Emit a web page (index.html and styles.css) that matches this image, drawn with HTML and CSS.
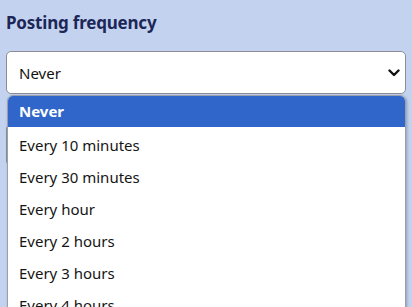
FILE: index.html
```html
<!DOCTYPE html>
<html lang="en">
<head>
	<meta charset="UTF-8">
	<title>Posting frequency</title>
	<link rel="stylesheet" href="styles.css">
</head>
<body>
	<div class="field">
		<h2 class="label">Posting frequency</h2>
		<div class="picker">
			<div class="select">
				<span>Never</span>
				<svg class="chev" width="12" height="8" viewBox="0 0 12 8"><path d="M1.5 1.5 L6 6 L10.5 1.5" fill="none" stroke="#111" stroke-width="2.4" stroke-linecap="round" stroke-linejoin="round"/></svg>
			</div>
			<ul class="options">
				<li class="selected">Never</li>
				<li>Every 10 minutes</li>
				<li>Every 30 minutes</li>
				<li>Every hour</li>
				<li>Every 2 hours</li>
				<li>Every 3 hours</li>
				<li>Every 4 hours</li>
				<li>Every 6 hours</li>
			</ul>
		</div>
		<div class="below"></div>
	</div>
</body>
</html>
```

FILE: styles.css
```css
body{
	margin:0;
	background:#c3d3ef;
	font-family:"Noto Sans", "Open Sans", sans-serif;
	height:307px;
	overflow:hidden;
}
.field{
	padding:11px 6px 0 6px;
}
.label{
	margin:0;
	font-size:17px;
	font-weight:700;
	color:#1c2758;
	line-height:24px;
	letter-spacing:-0.2px;
}
.picker{
	position:relative;
	margin-top:16px;
}
.select{
	height:41px;
	background:#fff;
	border:1px solid #8a8d96;
	border-radius:5px;
	display:flex;
	align-items:center;
	justify-content:space-between;
	padding:0 5px 0 12px;
	font-size:15px;
	color:#111;
}
.chev{
	margin-top:1px;
}
.options{
	position:absolute;
	top:44px;
	left:1px;
	right:0;
	margin:0;
	padding:0;
	list-style:none;
	background:#fff;
	border:1px solid #9aa0ab;
	border-radius:6px 6px 0 0;
	box-shadow:1px 1px 3px rgba(40,50,80,0.35);
	height:240px;
	overflow:hidden;
	z-index:9;
}
.options li{
	height:32px;
	line-height:32px;
	padding-left:11px;
	font-size:15px;
	color:#151515;
}
.options li.selected{
	height:31px;
	line-height:30px;
	margin-bottom:2px;
	background:#3066c9;
	color:#fff;
	font-weight:700;
}
.below{
	margin-top:30px;
	height:40px;
	background:#fff;
	border:1px solid #8a8d96;
	border-radius:5px;
}
```
